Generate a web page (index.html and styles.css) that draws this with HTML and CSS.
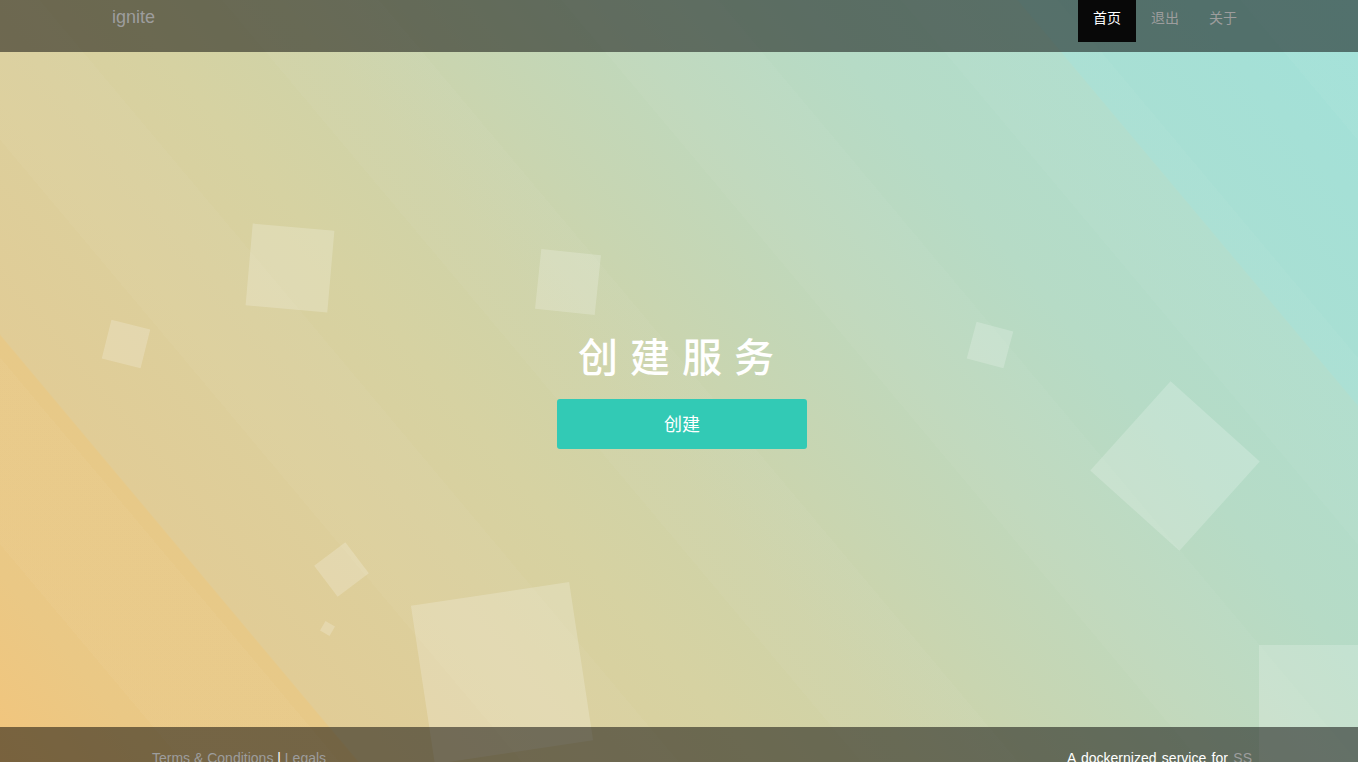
FILE: index.html
```html
<!DOCTYPE html>
<html lang="zh-CN">
<head>
<meta charset="utf-8">
<title>ignite</title>
<link rel="stylesheet" href="styles.css">
</head>
<body>
<div class="page">
  <div class="bubbles" aria-hidden="true">
    <span class="sq sq1"></span>
    <span class="sq sq2"></span>
    <span class="sq sq3"></span>
    <span class="sq sq4"></span>
    <span class="sq sq5"></span>
    <span class="sq sq6"></span>
    <span class="sq sq7"></span>
    <span class="sq sq8"></span>
    <span class="sq sq9"></span>
  </div>

  <header class="navbar">
    <a class="brand" href="#">ignite</a>
    <nav class="nav">
      <a class="nav-link active" href="#">首页</a>
      <a class="nav-link" href="#">退出</a>
      <a class="nav-link" href="#">关于</a>
    </nav>
  </header>

  <main class="hero">
    <div class="hero-inner">
      <h1 class="hero-title">创建服务</h1>
      <button class="btn-create" type="button">创建</button>
    </div>
  </main>

  <footer class="footer">
    <div class="footer-left">
      <a class="f-link" href="#">Terms &amp; Conditions</a> | <a class="f-link" href="#">Legals</a>
    </div>
    <div class="footer-right">
      A dockernized service for <a class="f-link" href="#">SS</a>
    </div>
  </footer>
</div>
</body>
</html>
```

FILE: styles.css
```css
html, body {
  margin: 0;
  padding: 0;
  height: 100%;
  overflow: hidden;
}

body {
  font-family: "Liberation Sans", "Noto Sans CJK SC", sans-serif;
  font-size: 14px;
  color: #fff;
}

a {
  text-decoration: none;
}

.page {
  position: relative;
  height: 100vh;
  overflow: hidden;
  display: flex;
  flex-direction: column;
  background:
    repeating-linear-gradient(50deg,
      rgba(255,255,255,0) 0px,
      rgba(255,255,255,0) 140px,
      rgba(255,255,255,0.03) 140px,
      rgba(255,255,255,0.03) 260px),
    linear-gradient(50deg,
      #f2c57c 0%,
      #eac885 8%,
      #e7c988 17.9%,
      #e1cc96 18%,
      #dccf9c 28%,
      #d6d2a2 38%,
      #cfd3a8 46%,
      #c9d5b0 52%,
      #bfd8bc 62%,
      #b6dbc6 72%,
      #b0ddcc 82.9%,
      #a9dfd3 83%,
      #a1e1d9 100%);
}

/* decorative floating squares */
.bubbles {
  position: absolute;
  inset: 0;
  z-index: 0;
  pointer-events: none;
}

.sq {
  position: absolute;
  display: block;
  background: rgba(255, 255, 255, 0.2);
}

.sq1 { left: 249px; top: 227px; width: 82px; height: 82px; transform: rotate(5deg); }
.sq2 { left: 538px; top: 252px; width: 60px; height: 60px; transform: rotate(6deg); }
.sq3 { left: 106px; top: 324px; width: 40px; height: 40px; transform: rotate(14deg); }
.sq4 { left: 971px; top: 326px; width: 38px; height: 38px; transform: rotate(15deg); }
.sq5 { left: 1115px; top: 406px; width: 120px; height: 120px; transform: rotate(42deg); }
.sq6 { left: 322px; top: 550px; width: 39px; height: 39px; transform: rotate(53deg); }
.sq7 { left: 322px; top: 623px; width: 11px; height: 11px; transform: rotate(30deg); }
.sq8 { left: 422px; top: 593px; width: 160px; height: 160px; transform: rotate(-8.6deg); }
.sq9 { left: 1259px; top: 645px; width: 160px; height: 160px; }

/* header */
.navbar {
  position: relative;
  z-index: 1;
  flex: 0 0 52px;
  height: 52px;
  box-sizing: border-box;
  display: flex;
  justify-content: space-between;
  align-items: flex-start;
  padding: 0 106px 0 112px;
  background: rgba(0, 0, 0, 0.5);
}

.brand {
  font-family: "Liberation Sans", sans-serif;
  font-size: 18px;
  line-height: 20px;
  padding-top: 7px;
  color: #9d9d9d;
}

.nav {
  display: flex;
}

.nav-link {
  font-family: "Noto Sans CJK SC", sans-serif;
  font-size: 14px;
  line-height: 20px;
  padding: 7px 15px 15px;
  color: #9d9d9d;
}

.nav-link.active {
  background: #080808;
  color: #fff;
}

/* hero */
.hero {
  position: relative;
  z-index: 1;
  flex: 0 0 675px;
  height: 675px;
  box-sizing: border-box;
  display: flex;
  align-items: center;
  justify-content: center;
  padding: 3px 0 0 6px;
}

.hero-inner {
  display: flex;
  flex-direction: column;
  align-items: center;
}

.hero-title {
  margin: 0 0 22px;
  font-family: "Noto Sans CJK SC", sans-serif;
  font-size: 40px;
  font-weight: 500;
  line-height: 44px;
  letter-spacing: 12px;
  color: #fff;
}

.btn-create {
  width: 250px;
  height: 50px;
  border: 0;
  border-radius: 3px;
  background: #32cab5;
  color: #fff;
  font-family: "Noto Sans CJK SC", sans-serif;
  font-size: 18px;
  line-height: 24px;
  padding: 0 0 2px;
  cursor: pointer;
}

/* footer */
.footer {
  position: relative;
  z-index: 1;
  flex: 0 0 60px;
  height: 60px;
  box-sizing: border-box;
  display: flex;
  justify-content: space-between;
  padding: 21px 106px 0 152px;
  background: rgba(0, 0, 0, 0.5);
  font-size: 14px;
  line-height: 20px;
  color: #fff;
}

.footer-right {
  word-spacing: 1.5px;
}

.f-link {
  color: #9d9d9d;
}
```
